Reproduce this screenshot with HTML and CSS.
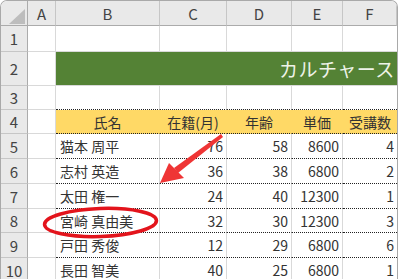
FILE: index.html
```html
<!DOCTYPE html>
<html lang="ja">
  <head>
    <meta charset="UTF-8" />
    <title>カルチャースクール</title>
    <link rel="stylesheet" href="styles.css">
  </head>
  <body>
    <div class="sheet">
      <div class="grid">
        <!-- column headers -->
        <div class="hd corner">
          <svg width="27" height="25" viewBox="0 0 27 25"><polygon points="8,23 24,23 24,8" fill="#bdbdbd" /></svg>
        </div>
        <div class="hd">A</div>
        <div class="hd">B</div>
        <div class="hd">C</div>
        <div class="hd">D</div>
        <div class="hd">E</div>
        <div class="hd last">F</div>

        <!-- row 1 -->
        <div class="rh">1</div>
        <div class="c"></div>
        <div class="c"></div>
        <div class="c"></div>
        <div class="c"></div>
        <div class="c"></div>
        <div class="c last"></div>

        <!-- row 2 -->
        <div class="rh">2</div>
        <div class="c"></div>
        <div class="ttl">カルチャース</div>

        <!-- row 3 -->
        <div class="rh">3</div>
        <div class="c"></div>
        <div class="c dot"></div>
        <div class="c dot"></div>
        <div class="c dot"></div>
        <div class="c dot"></div>
        <div class="c dot last"></div>

        <!-- row 4 -->
        <div class="rh">4</div>
        <div class="c"></div>
        <div class="c yl dot mid">氏名</div>
        <div class="c yl dot mid">在籍(月)</div>
        <div class="c yl dot mid">年齢</div>
        <div class="c yl dot mid">単価</div>
        <div class="c yl dot mid last">受講数</div>
      </div>
      <div class="grid rows" id="rows"></div>

      <svg class="marks" width="400" height="279" viewBox="0 0 400 279">
        <polygon points="221,134 223,137 178,173 174,168" fill="#ef3535" />
        <polygon points="160,183 169,163 184,178" fill="#ef3535" />
        <ellipse cx="100.5" cy="222.5" rx="56" ry="14" fill="none" stroke="#e3141c" stroke-width="3.5" transform="rotate(-2 100.5 222.5)" />
      </svg>
    </div>

    <script>
      // rows 5-10
      const students = [
        { no: 5, name: "猫本 周平", month: 76, age: 58, price: 8600, count: 4 },
        { no: 6, name: "志村 英造", month: 36, age: 38, price: 6800, count: 2 },
        { no: 7, name: "太田 権一", month: 24, age: 40, price: 12300, count: 1 },
        { no: 8, name: "宮崎 真由美", month: 32, age: 30, price: 12300, count: 3 },
        { no: 9, name: "戸田 秀俊", month: 12, age: 29, price: 6800, count: 6 },
        { no: 10, name: "長田 智美", month: 40, age: 25, price: 6800, count: 1 },
      ];

      const rows = document.getElementById("rows");
      students.forEach((s) => {
        rows.innerHTML += `
          <div class="rh">${s.no}</div>
          <div class="c"></div>
          <div class="c dot">${s.name}</div>
          <div class="c dot num">${s.month}</div>
          <div class="c dot num">${s.age}</div>
          <div class="c dot num">${s.price}</div>
          <div class="c dot num last">${s.count}</div>
        `;
      });
    </script>
  </body>
</html>
```

FILE: styles.css
```css
body {
  margin: 0;
  font-family: "Noto Sans CJK JP", "Noto Sans", sans-serif;
  background-color: white;
  overflow: hidden;
}
.sheet {
  position: relative;
  width: 396px;
  height: 290px;
  border: 1px solid #a9a9a9;
  border-bottom: none;
  border-radius: 7px 7px 0 0;
  overflow: hidden;
}
.grid {
  display: grid;
  grid-template-columns: 27px 28px 104px 67px 65px 51px 54px;
  grid-template-rows: 25px 26px 34px 24px 24px;
}
.grid.rows {
  grid-template-rows: 25px 25px 25px 24px 25px 25px;
}
.grid > div {
  box-sizing: border-box;
}
/* headers */
.hd {
  background-color: #e9e9e9;
  border-right: 1px solid #c6c6c6;
  border-bottom: 1px solid #ababab;
  color: #444;
  font-size: 15px;
  display: flex;
  align-items: center;
  justify-content: center;
}
.hd.corner {
  display: block;
  border-right-color: #ababab;
}
.hd.corner svg {
  display: block;
}
.rh {
  background-color: #e9e9e9;
  border-right: 1px solid #ababab;
  border-bottom: 1px solid #c6c6c6;
  color: #444;
  font-size: 15px;
  display: flex;
  align-items: center;
  justify-content: center;
}
/* cells */
.c {
  border-right: 1px solid #d9d9d9;
  border-bottom: 1px solid #d9d9d9;
  font-size: 14px;
  color: #333;
  display: flex;
  align-items: center;
  padding: 0 3px 0 4px;
  white-space: nowrap;
  overflow: hidden;
}
.c.last {
  border-right: none;
}
.c.dot {
  border-bottom: 1px dotted #222;
}
.c.yl {
  background-color: #ffd966;
  border-right-color: #ffd966;
}
.c.mid {
  justify-content: center;
  padding: 0;
}
.c.num {
  justify-content: flex-end;
}
.ttl {
  grid-column: 3 / 8;
  background-color: #548235;
  border-bottom: 1px solid #d9d9d9;
  color: #eef3e8;
  font-size: 19px;
  letter-spacing: 0.5px;
  display: flex;
  align-items: center;
  padding-left: 223px;
  white-space: nowrap;
  overflow: hidden;
}
/* arrow and circle drawn over the sheet */
.marks {
  position: absolute;
  left: -1px;
  top: -1px;
}
```
